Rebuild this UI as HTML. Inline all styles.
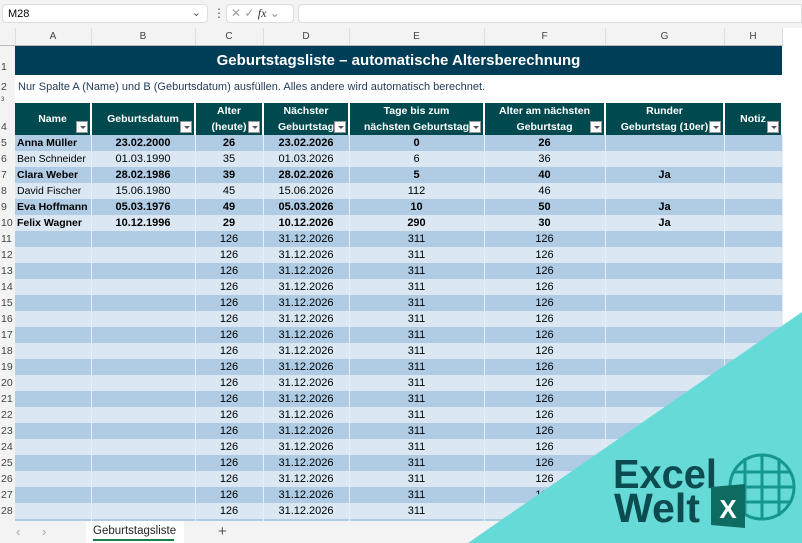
<!DOCTYPE html>
<html><head><meta charset="utf-8"><style>
*{margin:0;padding:0;box-sizing:border-box}
body{width:802px;height:543px;overflow:hidden;background:#fff;font-family:"Liberation Sans",sans-serif;position:relative;font-size:11px;color:#000}
.bar{position:absolute;left:0;top:0;width:802px;height:28px;background:#f3f3f3}
.nb{position:absolute;left:2px;top:4px;width:206px;height:19px;background:#fff;border:1px solid #ddd;border-radius:4px;font-size:11px;padding:3px 5px}
.fb{position:absolute;left:226px;top:4px;width:68px;height:19px;background:#fff;border:1px solid #ddd;border-radius:4px;color:#999;font-size:12px;padding:1px 4px}
.fx{position:absolute;left:298px;top:4px;width:504px;height:19px;background:#fff;border:1px solid #ddd;border-radius:4px 0 0 4px}
table{position:absolute;left:0;top:28px;width:802px;border-collapse:collapse;table-layout:fixed}
td{height:16px;padding:0 3px;white-space:nowrap;overflow:hidden;font-size:11px;line-height:15px}
.ch td{height:17px;background:#f3f3f3;text-align:center;color:#444;border-right:1px solid #ddd;border-bottom:1px solid #bbb;font-size:10px}
td.rh{background:#f3f3f3;color:#444;text-align:left;padding-left:1px;font-size:10.5px;vertical-align:bottom}
.o td.c{background:#b0cce4}.e td.c{background:#dbe7f2}
td.c{border-right:1px solid #e8eef5;text-align:center}
td.l{text-align:left;font-size:10.5px;padding-left:2px}
.b{font-weight:bold}
.hd td.c{background:#004a4f;color:#fff;font-weight:bold;font-size:10.5px;line-height:16px;border-right:2px solid #fff;vertical-align:bottom;position:relative}
.dd{position:absolute;right:2px;bottom:2px;width:12px;height:12px;background:#fff;border:1px solid #999}
.dd:after{content:"";position:absolute;left:3px;top:4px;border:3px solid transparent;border-top:3px solid #555}
.tabs{position:absolute;left:0;top:521px;width:802px;height:22px;background:#f3f3f3}
.tri{position:absolute;left:0;top:0}
</style></head><body>
<div class="bar"><div class="nb">M28<span style="position:absolute;right:6px;top:1px;color:#555">⌄</span></div>
<div style="position:absolute;left:213px;top:6px;color:#555;font-size:12px">⋮</div>
<div class="fb">✕ ✓ <i style="font-family:'Liberation Serif';color:#333">fx</i> ⌄</div><div class="fx"></div></div>
<table>
<colgroup><col style="width:15px"><col style="width:76px"><col style="width:104px"><col style="width:68px"><col style="width:86px"><col style="width:135px"><col style="width:121px"><col style="width:119px"><col style="width:58px"><col style="width:20px"></colgroup>
<tr class="ch"><td></td><td>A</td><td>B</td><td>C</td><td>D</td><td>E</td><td>F</td><td>G</td><td>H</td><td style="background:#fff;border:none"></td></tr>
<tr><td class="rh" style="height:30px">1</td><td colspan="8" style="background:#003d57;color:#fff;font-weight:bold;font-size:15px;text-align:center;height:30px">Geburtstagsliste – automatische Altersberechnung</td><td></td></tr>
<tr><td class="rh" style="height:20px">2</td><td colspan="8" style="color:#1f3a5a;height:20px;vertical-align:bottom">Nur Spalte A (Name) und B (Geburtsdatum) ausfüllen. Alles andere wird automatisch berechnet.</td><td></td></tr>
<tr><td class="rh" style="height:8px;font-size:6px;line-height:6px">3</td><td colspan="9" style="height:8px"></td></tr>
<tr class="hd"><td class="rh" style="height:32px">4</td>
<td class="c" style="height:32px;vertical-align:middle">Name<span class="dd"></span></td>
<td class="c" style="vertical-align:middle">Geburtsdatum<span class="dd"></span></td>
<td class="c">Alter<br>(heute)<span class="dd"></span></td>
<td class="c">Nächster<br>Geburtstag<span class="dd"></span></td>
<td class="c">Tage bis zum<br>nächsten Geburtstag<span class="dd"></span></td>
<td class="c">Alter am nächsten<br>Geburtstag<span class="dd"></span></td>
<td class="c">Runder<br>Geburtstag (10er)<span class="dd"></span></td>
<td class="c" style="vertical-align:middle">Notiz<span class="dd"></span></td><td></td></tr>
<tr class="o b"><td class="rh" style="font-weight:normal">5</td><td class="c l">Anna Müller</td><td class="c">23.02.2000</td><td class="c">26</td><td class="c">23.02.2026</td><td class="c">0</td><td class="c">26</td><td class="c"></td><td class="c"></td><td></td></tr>
<tr class="e"><td class="rh">6</td><td class="c l">Ben Schneider</td><td class="c">01.03.1990</td><td class="c">35</td><td class="c">01.03.2026</td><td class="c">6</td><td class="c">36</td><td class="c"></td><td class="c"></td><td></td></tr>
<tr class="o b"><td class="rh" style="font-weight:normal">7</td><td class="c l">Clara Weber</td><td class="c">28.02.1986</td><td class="c">39</td><td class="c">28.02.2026</td><td class="c">5</td><td class="c">40</td><td class="c">Ja</td><td class="c"></td><td></td></tr>
<tr class="e"><td class="rh">8</td><td class="c l">David Fischer</td><td class="c">15.06.1980</td><td class="c">45</td><td class="c">15.06.2026</td><td class="c">112</td><td class="c">46</td><td class="c"></td><td class="c"></td><td></td></tr>
<tr class="o b"><td class="rh" style="font-weight:normal">9</td><td class="c l">Eva Hoffmann</td><td class="c">05.03.1976</td><td class="c">49</td><td class="c">05.03.2026</td><td class="c">10</td><td class="c">50</td><td class="c">Ja</td><td class="c"></td><td></td></tr>
<tr class="e b"><td class="rh" style="font-weight:normal">10</td><td class="c l">Felix Wagner</td><td class="c">10.12.1996</td><td class="c">29</td><td class="c">10.12.2026</td><td class="c">290</td><td class="c">30</td><td class="c">Ja</td><td class="c"></td><td></td></tr>
<tr class="o"><td class="rh">11</td><td class="c"></td><td class="c"></td><td class="c">126</td><td class="c">31.12.2026</td><td class="c">311</td><td class="c">126</td><td class="c"></td><td class="c"></td><td></td></tr>
<tr class="e"><td class="rh">12</td><td class="c"></td><td class="c"></td><td class="c">126</td><td class="c">31.12.2026</td><td class="c">311</td><td class="c">126</td><td class="c"></td><td class="c"></td><td></td></tr>
<tr class="o"><td class="rh">13</td><td class="c"></td><td class="c"></td><td class="c">126</td><td class="c">31.12.2026</td><td class="c">311</td><td class="c">126</td><td class="c"></td><td class="c"></td><td></td></tr>
<tr class="e"><td class="rh">14</td><td class="c"></td><td class="c"></td><td class="c">126</td><td class="c">31.12.2026</td><td class="c">311</td><td class="c">126</td><td class="c"></td><td class="c"></td><td></td></tr>
<tr class="o"><td class="rh">15</td><td class="c"></td><td class="c"></td><td class="c">126</td><td class="c">31.12.2026</td><td class="c">311</td><td class="c">126</td><td class="c"></td><td class="c"></td><td></td></tr>
<tr class="e"><td class="rh">16</td><td class="c"></td><td class="c"></td><td class="c">126</td><td class="c">31.12.2026</td><td class="c">311</td><td class="c">126</td><td class="c"></td><td class="c"></td><td></td></tr>
<tr class="o"><td class="rh">17</td><td class="c"></td><td class="c"></td><td class="c">126</td><td class="c">31.12.2026</td><td class="c">311</td><td class="c">126</td><td class="c"></td><td class="c"></td><td></td></tr>
<tr class="e"><td class="rh">18</td><td class="c"></td><td class="c"></td><td class="c">126</td><td class="c">31.12.2026</td><td class="c">311</td><td class="c">126</td><td class="c"></td><td class="c"></td><td></td></tr>
<tr class="o"><td class="rh">19</td><td class="c"></td><td class="c"></td><td class="c">126</td><td class="c">31.12.2026</td><td class="c">311</td><td class="c">126</td><td class="c"></td><td class="c"></td><td></td></tr>
<tr class="e"><td class="rh">20</td><td class="c"></td><td class="c"></td><td class="c">126</td><td class="c">31.12.2026</td><td class="c">311</td><td class="c">126</td><td class="c"></td><td class="c"></td><td></td></tr>
<tr class="o"><td class="rh">21</td><td class="c"></td><td class="c"></td><td class="c">126</td><td class="c">31.12.2026</td><td class="c">311</td><td class="c">126</td><td class="c"></td><td class="c"></td><td></td></tr>
<tr class="e"><td class="rh">22</td><td class="c"></td><td class="c"></td><td class="c">126</td><td class="c">31.12.2026</td><td class="c">311</td><td class="c">126</td><td class="c"></td><td class="c"></td><td></td></tr>
<tr class="o"><td class="rh">23</td><td class="c"></td><td class="c"></td><td class="c">126</td><td class="c">31.12.2026</td><td class="c">311</td><td class="c">126</td><td class="c"></td><td class="c"></td><td></td></tr>
<tr class="e"><td class="rh">24</td><td class="c"></td><td class="c"></td><td class="c">126</td><td class="c">31.12.2026</td><td class="c">311</td><td class="c">126</td><td class="c"></td><td class="c"></td><td></td></tr>
<tr class="o"><td class="rh">25</td><td class="c"></td><td class="c"></td><td class="c">126</td><td class="c">31.12.2026</td><td class="c">311</td><td class="c">126</td><td class="c"></td><td class="c"></td><td></td></tr>
<tr class="e"><td class="rh">26</td><td class="c"></td><td class="c"></td><td class="c">126</td><td class="c">31.12.2026</td><td class="c">311</td><td class="c">126</td><td class="c"></td><td class="c"></td><td></td></tr>
<tr class="o"><td class="rh">27</td><td class="c"></td><td class="c"></td><td class="c">126</td><td class="c">31.12.2026</td><td class="c">311</td><td class="c">126</td><td class="c"></td><td class="c"></td><td></td></tr>
<tr class="e"><td class="rh">28</td><td class="c"></td><td class="c"></td><td class="c">126</td><td class="c">31.12.2026</td><td class="c">311</td><td class="c">126</td><td class="c"></td><td class="c"></td><td></td></tr>
<tr class="o"><td class="rh">29</td><td class="c"></td><td class="c"></td><td class="c">126</td><td class="c">31.12.2026</td><td class="c">311</td><td class="c">126</td><td class="c"></td><td class="c"></td><td></td></tr>
</table>
<div class="tabs">
<span style="position:absolute;left:16px;top:3px;color:#aaa;font-size:13px">‹</span>
<span style="position:absolute;left:42px;top:3px;color:#aaa;font-size:13px">›</span>
<div style="position:absolute;left:86px;top:0;width:98px;height:22px;background:#fff;font-size:11.5px;padding:4px 7px;color:#222">Geburtstagsliste<div style="position:absolute;left:7px;right:10px;bottom:2px;height:2px;background:#1a7f4b"></div></div>
<span style="position:absolute;left:218px;top:2px;color:#555;font-size:15px">+</span>
</div>
<svg class="tri" width="802" height="543" viewBox="0 0 802 543" style="position:absolute;left:0;top:0">
<polygon points="802,312 802,543 468,543" fill="#66dad6"/>
<g fill="none" stroke="#15968f" stroke-width="3">
<circle cx="762" cy="487" r="32"/>
<line x1="745" y1="458" x2="745" y2="516"/><line x1="762" y1="455" x2="762" y2="519"/><line x1="779" y1="458" x2="779" y2="516"/>
<line x1="733" y1="472" x2="791" y2="472"/><line x1="730" y1="487" x2="794" y2="487"/><line x1="733" y1="502" x2="791" y2="502"/>
</g>
<text x="613" y="488" font-family="Liberation Sans" font-weight="bold" font-size="41" fill="#0c4b50" textLength="104" lengthAdjust="spacingAndGlyphs">Excel</text>
<text x="614" y="522" font-family="Liberation Sans" font-weight="bold" font-size="41" fill="#0c4b50" textLength="86" lengthAdjust="spacingAndGlyphs">Welt</text>
<polygon points="711,487 745,484 745,528 711,525" fill="#0e6b62"/>
<text x="728" y="518" text-anchor="middle" font-family="Liberation Sans" font-weight="bold" font-size="26" fill="#fff">X</text>
</svg>
</body></html>
